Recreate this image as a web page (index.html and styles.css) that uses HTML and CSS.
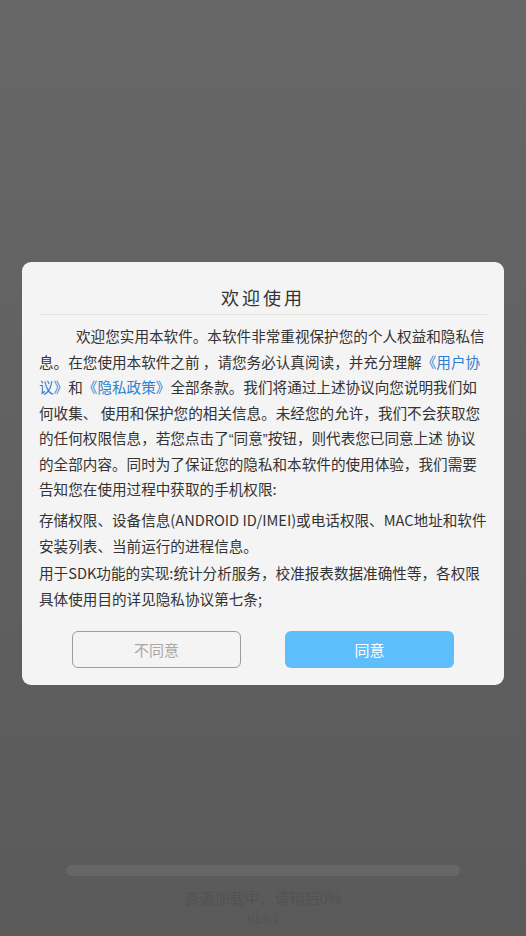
FILE: index.html
```html
<!DOCTYPE html>
<html lang="zh-CN">
<head>
<meta charset="utf-8">
<title>欢迎使用</title>
<link rel="stylesheet" href="styles.css">
</head>
<body>
<div class="splash">
  <div class="loader">
    <div class="bar"></div>
    <div class="loading-text">资源加载中，请稍后0%</div>
    <div class="version">V1.0.1</div>
  </div>
</div>
<div class="mask">
  <div class="dialog">
    <div class="title">欢迎使用</div>
    <div class="divider"></div>
    <p class="intro">欢迎您实用本软件。本软件非常重视保护您的个人权益和隐私信息。在您使用本软件之前 ，请您务必认真阅读，并充分理解<span class="link">《用户协议》</span>和<span class="link">《隐私政策》</span>全部条款。我们将通过上述协议向您说明我们如何收集、 使用和保护您的相关信息。未经您的允许，我们不会获取您的任何权限信息，若您点击了<span class="q">“</span>同意<span class="q">”</span>按钮，则代表您已同意上述 协议的全部内容。同时为了保证您的隐私和本软件的使用体验，我们需要告知您在使用过程中获取的手机权限:</p>
    <p class="perm">存储权限、设备信息(ANDROID ID/IMEI)或电话权限、MAC地址和软件安装列表、当前运行的进程信息。<br>用于SDK功能的实现:统计分析服务，校准报表数据准确性等，各权限具体使用目的详见隐私协议第七条;</p>
    <div class="actions">
      <button class="btn btn-ghost">不同意</button>
      <button class="btn btn-primary">同意</button>
    </div>
  </div>
</div>
</body>
</html>
```
FILE: styles.css
```css
html, body {
  margin: 0;
  padding: 0;
}
body {
  width: 526px;
  height: 936px;
  overflow: hidden;
  font-family: "Noto Sans CJK SC", "Noto Sans", sans-serif;
  background: linear-gradient(#676767, #5a5a5a);
}
.splash {
  height: 936px;
  display: flex;
  flex-direction: column;
  justify-content: flex-end;
}
.loader {
  display: flex;
  flex-direction: column;
  align-items: center;
  padding: 0 66px 10px;
}
.bar {
  align-self: stretch;
  height: 11px;
  border-radius: 6px;
  background: #666666;
}
.loading-text {
  margin-top: 11px;
  font-size: 15px;
  line-height: 22px;
  color: #525252;
}
.version {
  margin-top: 1px;
  font-size: 11px;
  line-height: 16px;
  color: #525252;
}
.mask {
  position: fixed;
  inset: 0;
  display: flex;
  justify-content: center;
  align-items: flex-start;
  padding-top: 262px;
}
.dialog {
  width: 448px;
  padding: 0 17px 17px;
  background: #f4f4f4;
  border-radius: 9px;
  color: #333333;
}
.title {
  padding-top: 22px;
  line-height: 26px;
  font-size: 18px;
  letter-spacing: 3px;
  text-align: center;
  margin-bottom: 4px;
  color: #333333;
}
.divider {
  height: 1px;
  background: #e5e1dc;
}
.intro {
  margin: 8px 0 0;
  font-size: 14.6px;
  line-height: 25.5px;
  text-indent: 37px;
}
.link {
  color: #2f7fd0;
}
.q {
  font-family: "Liberation Sans", sans-serif;
  line-height: 0;
}
.perm {
  margin: 5px 0 0;
  font-size: 14.6px;
  line-height: 26.5px;
}
.actions {
  display: flex;
  justify-content: center;
  gap: 44px;
  margin-top: 18px;
}
.btn {
  width: 169px;
  height: 37px;
  border-radius: 6px;
  font-family: inherit;
  font-size: 15px;
  padding: 0;
}
.btn-ghost {
  background: transparent;
  border: 1.5px solid #9c9c9c;
  color: #a8a8a8;
}
.btn-primary {
  background: #5ebdfb;
  border: none;
  color: #ffffff;
}
```
